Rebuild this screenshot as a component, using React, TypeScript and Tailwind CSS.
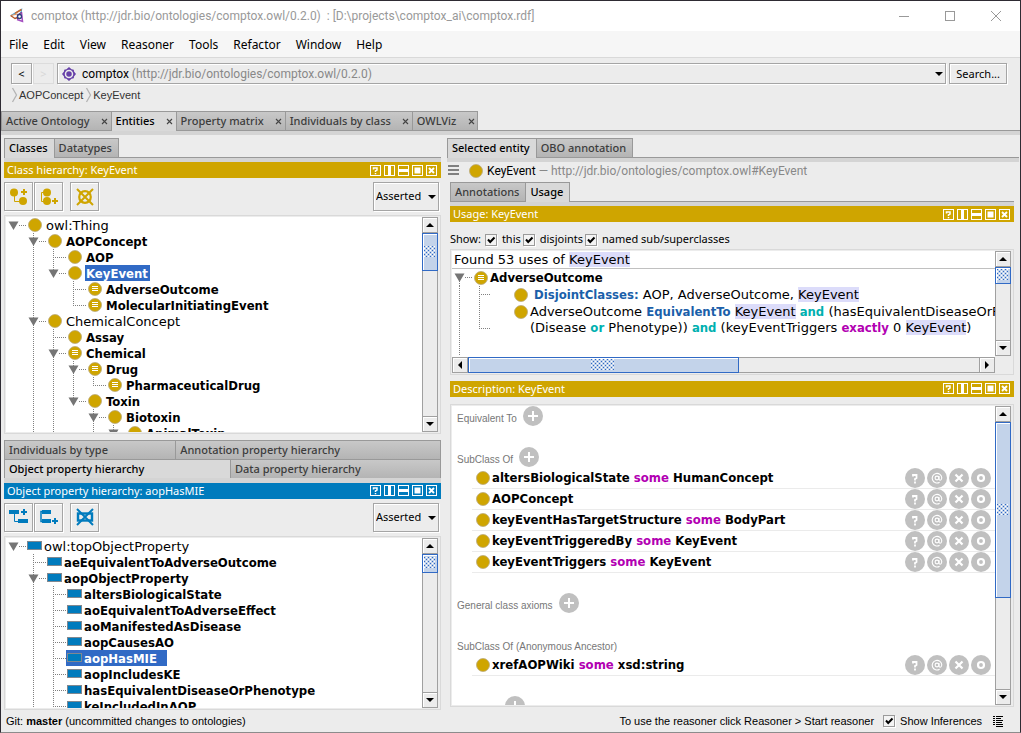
import React, { ReactNode } from "react";

const UI = "font-['Noto_Sans','Open_Sans',sans-serif]";
const URL_TEXT = "font-['Roboto',sans-serif] text-[12px]";
const TREE = "font-['DejaVu_Sans',Verdana,sans-serif]";
const BOLD = "font-bold font-['DejaVu_Sans_Condensed','DejaVu_Sans',sans-serif]";

/* ---------- small drawings ---------- */

function AppLogo() {
  return (
    <svg width="16" height="16" viewBox="0 0 16 16" fill="none" aria-hidden="true">
      <path d="M2 7.500 L12.500 1.500 L12 5" stroke="#4d9fd0" strokeWidth="1.300" />
      <path d="M6 5.300 L12.500 1.500" stroke="#c9682c" strokeWidth="1.500" />
      <path d="M2 7.500 L8.500 5.800" stroke="#dd9a6c" strokeWidth="1.200" />
      <path d="M1.500 7.500 L6 10.500 L8.500 9.500" stroke="#b4562a" strokeWidth="1.400" />
      <path d="M12.500 4 L13.500 13.500 L8 11.500" stroke="#a44fc0" strokeWidth="1.500" />
      <path d="M8.500 11 L8.500 7 L12.500 4.500" stroke="#5a3a86" strokeWidth="1.200" />
      <circle cx="10.500" cy="8.500" r="2" stroke="#2f3f7d" strokeWidth="1.300" />
    </svg>
  );
}

function OntologyIcon() {
  return (
    <svg width="14" height="14" viewBox="0 0 14 14" aria-hidden="true">
      <path d="M7 0L9.500 2.200L11.800 2.800L12 4.600L14 7L12 9.400L11.800 11.200L9.500 11.800L7 14L4.500 11.800L2.200 11.200L2 9.400L0 7L2 4.600L2.200 2.800L4.500 2.200Z" fill="#6640a8" />
      <circle cx="7" cy="7" r="3.500" fill="none" stroke="#ececec" strokeWidth="1.500" />
    </svg>
  );
}

function ClassIcon({ defined = false }: { defined?: boolean }) {
  return (
    <svg width="14" height="14" viewBox="0 0 14 14" className="shrink-0" aria-hidden="true">
      <circle cx="7" cy="7" r="6.500" fill="#cfa500" stroke="#b9a878" strokeWidth="0.800" />
      {defined && <path d="M4 4.500h6M4 6.500h6M4 8.500h6" stroke="#fff" strokeWidth="1" />}
    </svg>
  );
}

function PropIcon() {
  return (
    <svg width="16" height="9" viewBox="0 0 16 9" className="shrink-0" aria-hidden="true">
      <rect x="0.5" y="0.5" width="14" height="8" fill="#007bbd" stroke="#808890" />
    </svg>
  );
}

function Arrow({ dir }: { dir: "up" | "down" | "left" | "right" }) {
  const d = { up: "M0 6h8L4 2z", down: "M0 2h8L4 6z", left: "M6 0v8L2 4z", right: "M2 0v8l4-4z" }[dir];
  return (
    <svg width="8" height="8" viewBox="0 0 8 8" aria-hidden="true">
      <path d={d} fill="#000" />
    </svg>
  );
}

/* ---------- header bar of a view ---------- */

const viewActions: { name: string; draw: ReactNode }[] = [
  { name: "Help", draw: <path d="M3.500 4.500V3h3.500v2L5.500 6v1M5.500 8v1.300" stroke="#fff" strokeWidth="1.500" fill="none" /> },
  { name: "Split vertically", draw: <path d="M4 1h3v9H4z" fill="#fff" /> },
  { name: "Split horizontally", draw: <path d="M1 4h9v3H1z" fill="#fff" /> },
  { name: "Float", draw: <path d="M2.500 2.500h6v6h-6z" fill="#fff" /> },
  { name: "Close", draw: <path d="M3 3l5 5M8 3l-5 5" stroke="#fff" strokeWidth="1.900" /> },
];

function ViewHeader({ title, blue = false }: { title: string; blue?: boolean }) {
  return (
    <div className={`flex h-4 shrink-0 items-center justify-between pr-1 pl-[3px] text-white ${blue ? "bg-[#007bbd]" : "bg-[#cfa500]"}`}>
      <h2 className={`${UI} text-[11px] leading-4`}>{title}</h2>
      <div className="flex gap-[3px]">
        {viewActions.map((a) => (
          <button key={a.name} type="button" aria-label={a.name} className="block">
            <svg width="11" height="11" viewBox="0 0 11 11" className="block">
              <rect x="0.5" y="0.5" width="10" height="10" fill="none" stroke="#fff" />
              {a.draw}
            </svg>
          </button>
        ))}
      </div>
    </div>
  );
}

/* ---------- tabs ---------- */

type TabDef = { label: string; active?: boolean; close?: boolean };

function Tabs({ tabs }: { tabs: TabDef[] }) {
  return (
    <div className="shrink-0">
      <div role="tablist" className="flex h-5">
        {tabs.map((t, i) => (
          <div
            key={t.label}
            className={`flex items-start border-t border-[#999] ${i === 0 ? "border-l" : ""} ${
              t.active ? "border-r bg-[#d9d9d9]" : "border-r border-b bg-gradient-to-b from-[#c8c8c8] to-[#b4b4b4]"
            }`}
          >
            <button
              type="button"
              role="tab"
              aria-selected={!!t.active}
              className={`${UI} h-[18px] pr-[6px] pl-1 text-[11px] leading-[18px] font-medium whitespace-nowrap ${t.active ? "text-black" : "text-[#3c3c3c]"}`}
            >
              {t.label}
            </button>
            {t.close && (
              <button type="button" aria-label={`Close ${t.label}`} className="ml-[3px] flex h-[18px] w-3 items-center justify-center">
                <svg width="7" height="7" viewBox="0 0 7 7" aria-hidden="true">
                  <path d="M1 1l5 5M6 1l-5 5" stroke="#444" strokeWidth="1.100" />
                </svg>
              </button>
            )}
          </div>
        ))}
        <div className="flex-1 border-b border-[#999]" />
      </div>
      <div className="h-1 bg-[#d4d4d4]" />
    </div>
  );
}

/* ---------- scroll bars ---------- */

function Dots() {
  return (
    <svg width="12" height="12" className="max-h-full" aria-hidden="true">
      <defs>
        <pattern id="grip" width="4" height="4" patternUnits="userSpaceOnUse">
          <path d="M0 0h1v1H0zM2 2h1v1H2z" fill="#316ac5" />
          <path d="M2 0h1v1H2zM0 2h1v1H0z" fill="#fff" />
        </pattern>
      </defs>
      <rect width="12" height="12" fill="url(#grip)" />
    </svg>
  );
}

const scrollBtn = "flex size-4 shrink-0 items-center justify-center border border-[#a0a0a0] bg-[#ececec] shadow-[inset_1px_1px_0_#fff]";
const thumbCls = "flex items-center justify-center border border-[#316ac5] bg-[#c3d3ea] shadow-[inset_1px_1px_0_#fff]";

function VScroll({ thumb }: { thumb: string }) {
  return (
    <div className="flex w-4 shrink-0 flex-col bg-[#ececec]">
      <button type="button" aria-label="Scroll up" className={scrollBtn}><Arrow dir="up" /></button>
      <div className="min-h-0 flex-1 border-x border-[#a0a0a0]">
        <div className={`${thumbCls} -mx-px ${thumb}`}><Dots /></div>
      </div>
      <button type="button" aria-label="Scroll down" className={scrollBtn}><Arrow dir="down" /></button>
    </div>
  );
}

function HScroll({ thumb }: { thumb: string }) {
  return (
    <div className="flex h-4 shrink-0 bg-[#ececec]">
      <button type="button" aria-label="Scroll left" className={scrollBtn}><Arrow dir="left" /></button>
      <div className="flex min-w-0 flex-1 border-y border-[#a0a0a0]">
        <div className={`${thumbCls} -my-px ${thumb}`}><Dots /><Dots /></div>
      </div>
      <button type="button" aria-label="Scroll right" className={scrollBtn}><Arrow dir="right" /></button>
    </div>
  );
}

const boxCls = "flex min-h-0 border border-[#d9d9d9] bg-[#ececec] p-px pr-[2px]";

/* ---------- trees ---------- */

type Node = { label: string; depth: number; open?: boolean; defined?: boolean; plain?: boolean; selected?: boolean };

const classTree: Node[] = [
  { label: "owl:Thing", depth: 0, open: true, plain: true },
  { label: "AOPConcept", depth: 1, open: true },
  { label: "AOP", depth: 2 },
  { label: "KeyEvent", depth: 2, open: true, selected: true },
  { label: "AdverseOutcome", depth: 3, defined: true },
  { label: "MolecularInitiatingEvent", depth: 3, defined: true },
  { label: "ChemicalConcept", depth: 1, open: true, plain: true },
  { label: "Assay", depth: 2 },
  { label: "Chemical", depth: 2, open: true, defined: true },
  { label: "Drug", depth: 3, open: true, defined: true },
  { label: "PharmaceuticalDrug", depth: 4, defined: true },
  { label: "Toxin", depth: 3, open: true },
  { label: "Biotoxin", depth: 4, open: true },
  { label: "AnimalToxin", depth: 5, open: true },
];

const propTree: Node[] = [
  { label: "owl:topObjectProperty", depth: 0, open: true, plain: true },
  { label: "aeEquivalentToAdverseOutcome", depth: 1 },
  { label: "aopObjectProperty", depth: 1, open: true },
  { label: "altersBiologicalState", depth: 2 },
  { label: "aoEquivalentToAdverseEffect", depth: 2 },
  { label: "aoManifestedAsDisease", depth: 2 },
  { label: "aopCausesAO", depth: 2 },
  { label: "aopHasMIE", depth: 2, selected: true },
  { label: "aopIncludesKE", depth: 2 },
  { label: "hasEquivalentDiseaseOrPhenotype", depth: 2 },
  { label: "keIncludedInAOP", depth: 2 },
];

/* A branch line goes on below row i when a later sibling follows, loaded or not. */
function continues(nodes: Node[], i: number, depth: number, pending: number[]) {
  for (let j = i + 1; j < nodes.length; j++) {
    if (nodes[j].depth < depth) return false;
    if (nodes[j].depth === depth) return true;
  }
  return pending.includes(depth);
}

function Guide({ up, down, across, toggle }: { up?: boolean; down?: boolean; across?: boolean; toggle?: boolean }) {
  return (
    <svg width="20" height="16" viewBox="0 0 20 16" className="shrink-0" aria-hidden="true">
      {up && <path d="M7.500 0V8" stroke="#808080" strokeDasharray="1 1" />}
      {down && <path d="M7.500 8V16" stroke="#808080" strokeDasharray="1 1" />}
      {across && <path d={toggle ? "M13 8.500H20" : "M7 8.500H20"} stroke="#808080" strokeDasharray="1 1" />}
      {toggle && <path d="M2.500 4.500h10L7.500 13z" fill="#757575" />}
    </svg>
  );
}

function Tree({ nodes, kind, label, pending }: { nodes: Node[]; kind: "class" | "property"; label: string; pending: number[] }) {
  return (
    <ul role="tree" aria-label={label} className={`${TREE} min-w-0 flex-1 overflow-hidden bg-white text-[13px]`}>
      {nodes.map((n, i) => (
        <li key={n.label} role="treeitem" aria-level={n.depth + 1} aria-selected={!!n.selected} className="flex h-4 whitespace-nowrap">
          {Array.from({ length: n.depth + 1 }, (_, d) => {
            const more = d > 0 && continues(nodes, i, d, pending);
            return d < n.depth ? (
              <Guide key={d} up={more} down={more} />
            ) : (
              <Guide key={d} up={d > 0} down={more} across toggle={n.open} />
            );
          })}
          {kind === "class" ? (
            <>
              <span className="flex w-[19px] items-center pl-[2px]"><ClassIcon defined={n.defined} /></span>
              <span className={`pr-[2px] pl-px leading-[18px] ${n.plain ? "" : BOLD} ${n.selected ? "bg-[#316ac5] text-white" : "text-black"}`}>{n.label}</span>
            </>
          ) : (
            <span className={`flex items-center pl-px ${n.selected ? "bg-[#316ac5] pr-[10px] text-white" : "text-black"}`}>
              <PropIcon />
              <span className={`self-start pl-px leading-[18px] ${n.plain ? "" : BOLD}`}>{n.label}</span>
            </span>
          )}
        </li>
      ))}
    </ul>
  );
}

/* ---------- tree tool bars ---------- */

const toolBtn = "flex size-[29px] items-center justify-center border border-[#a5a5a5] bg-[#ececec] shadow-[inset_1px_1px_0_#fff,1px_1px_0_#fff]";

function TreeToolbar({ kind, id }: { kind: "class" | "property"; id: string }) {
  const g = "#cfa500";
  const b = "#007bbd";
  const icons =
    kind === "class"
      ? [
          { name: "Add subclass", art: <><circle cx="5" cy="5.500" r="4" fill={g} /><circle cx="14" cy="14" r="4" fill={g} /><path d="M5.500 8v6.500H11" stroke={g} fill="none" /><path d="M15 2v6M12 5h6" stroke={g} strokeWidth="2" /></> },
          { name: "Add sibling class", art: <><circle cx="8" cy="5.500" r="4" fill={g} /><circle cx="8" cy="14" r="4" fill={g} /><path d="M5 5.500H2.500v9H5" stroke={g} fill="none" /><path d="M16 11v6M13 14h6" stroke={g} strokeWidth="2" /></> },
          { name: "Delete class", art: <><circle cx="10" cy="10" r="5.800" fill="none" stroke={g} strokeWidth="2.200" /><path d="M2 2l16 16M18 2L2 18" stroke={g} strokeWidth="2" /></> },
        ]
      : [
          { name: "Add sub property", art: <><rect x="0" y="3" width="10" height="4" fill={b} /><rect x="9" y="12" width="10" height="4" fill={b} /><path d="M5.500 7v7.500H9" stroke={b} fill="none" /><path d="M15 2v6M12 5h6" stroke={b} strokeWidth="2" /></> },
          { name: "Add sibling property", art: <><rect x="3" y="3" width="9" height="4" fill={b} /><rect x="3" y="12" width="9" height="4" fill={b} /><path d="M4 4.500H2v10h2" stroke={b} fill="none" strokeWidth="1.500" /><path d="M16 11v6M13 14h6" stroke={b} strokeWidth="2" /></> },
          { name: "Delete property", art: <><rect x="3" y="6.500" width="14" height="7" fill="none" stroke={b} strokeWidth="2.400" /><path d="M2 2l16 16M18 2L2 18" stroke={b} strokeWidth="2" /></> },
        ];
  return (
    <div className="flex h-[37px] shrink-0 items-center justify-between pr-[2px]">
      <div className="flex gap-px">
        {icons.map((ic, i) => (
          <button key={ic.name} type="button" aria-label={ic.name} className={`${toolBtn} ${i === 2 ? "ml-[6px]" : ""}`}>
            <svg width="20" height="20" viewBox="0 0 20 20" aria-hidden="true">{ic.art}</svg>
          </button>
        ))}
      </div>
      <div className="relative">
        <select
          id={id}
          aria-label="Hierarchy mode"
          className={`${UI} h-[29px] w-[66px] appearance-none border border-[#a5a5a5] bg-[#ececec] pl-[2px] text-[11px] text-black shadow-[inset_1px_1px_0_#fff,1px_1px_0_#fff]`}
        >
          <option>Asserted</option>
          <option>Inferred</option>
        </select>
        <span className="pointer-events-none absolute top-[11px] right-[3px]"><Arrow dir="down" /></span>
      </div>
    </div>
  );
}

/* ---------- check boxes ---------- */

function Check({ id, label, className }: { id: string; label: string; className: string }) {
  return (
    <span className="flex items-center">
      <span className="relative flex">
        <input id={id} type="checkbox" defaultChecked className="peer size-3 appearance-none border border-[#9a9a9a] bg-[#f4f4f4] shadow-[1px_1px_0_#fff]" />
        <svg width="12" height="12" viewBox="0 0 12 12" className="pointer-events-none absolute inset-0 hidden peer-checked:block" aria-hidden="true">
          <path d="M3 5.500l2.200 2.500L9.500 3.500" stroke="#000" strokeWidth="2" fill="none" />
        </svg>
      </span>
      <label htmlFor={id} className={className}>{label}</label>
    </span>
  );
}

/* ---------- description ---------- */

const K = ({ children }: { children: ReactNode }) => <span className="text-[#b200b2]">{children}</span>;
const Hit = () => <span className="bg-[#dcdcfa]">KeyEvent</span>;

const rowActions: { name: string; art: ReactNode }[] = [
  { name: "Explain", art: <path d="M8 8.500V7h3.500v3l-1.500 1v1.500M10 13.500v2" stroke="#fff" strokeWidth="1.800" fill="none" /> },
  { name: "Annotate", art: <><circle cx="10" cy="10" r="1.900" stroke="#fff" strokeWidth="1.100" fill="none" /><path d="M12 8v3q0 1.200 1.200 1.200T14.800 10A4.800 4.800 0 1 0 12.600 14.200" stroke="#fff" strokeWidth="1.100" fill="none" /></> },
  { name: "Delete", art: <path d="M6.500 6.500l7 7M13.500 6.500l-7 7" stroke="#fff" strokeWidth="2.200" /> },
  { name: "Edit", art: <circle cx="10" cy="10" r="3" stroke="#fff" strokeWidth="2.200" fill="none" /> },
];

function AddButton({ name }: { name: string }) {
  return (
    <button type="button" aria-label={`Add ${name}`} className="block">
      <svg width="20" height="20" viewBox="0 0 20 20" className="block" aria-hidden="true">
        <circle cx="10" cy="10" r="10" fill="#c0c0c0" />
        <path d="M10 5v10M5 10h10" stroke="#fff" strokeWidth="2" />
      </svg>
    </button>
  );
}

function Section({ title, add = true, rows = [] }: { title: string; add?: boolean; rows?: ReactNode[] }) {
  return (
    <section className="mb-5">
      <div className="flex h-[21px] gap-[6px] pl-[5px]">
        <h3 className="pt-[7px] font-['Liberation_Sans',Arial,sans-serif] text-[10px] leading-3 text-[#777]">{title}</h3>
        {add && <AddButton name={title} />}
      </div>
      <ul className="pl-5">
        {rows.map((r, i) => (
          <li key={i} className="flex h-[21px] items-center border-b border-[#ebebeb] pr-1 pl-1">
            <ClassIcon />
            <span className={`${BOLD} flex-1 pl-[2px] text-[13px] leading-5 text-black`}>{r}</span>
            <span className="flex gap-[2px]">
              {rowActions.map((a) => (
                <button key={a.name} type="button" aria-label={a.name} className="block">
                  <svg width="20" height="20" viewBox="0 0 20 20" className="block" aria-hidden="true">
                    <circle cx="10" cy="10" r="10" fill="#c0c0c0" />
                    {a.art}
                  </svg>
                </button>
              ))}
            </span>
          </li>
        ))}
      </ul>
    </section>
  );
}

/* ---------- usage ---------- */

function UsageView() {
  return (
    <div className={`${boxCls} flex-[124_1_0px]`}>
      <div className="flex min-w-0 flex-1 flex-col">
        <div className={`${TREE} min-h-0 flex-1 overflow-hidden bg-white text-[13px] whitespace-nowrap text-black`}>
          <p className="h-[18px] border-b border-[#c0c0c0] pl-[2px] leading-[18px]">Found 53 uses of <Hit /></p>
          <div className="flex h-[17px]">
            <svg width="20" height="17" className="shrink-0" aria-hidden="true">
              <path d="M7.500 12V17" stroke="#808080" strokeDasharray="1 1" />
              <path d="M13 8.500H20" stroke="#808080" strokeDasharray="1 1" />
              <path d="M2.500 4.500h10L7.500 13z" fill="#757575" />
            </svg>
            <span className="flex items-center pl-[2px]"><ClassIcon defined /></span>
            <span className={`${BOLD} pl-[2px] leading-[17px]`}>AdverseOutcome</span>
          </div>
          <div className="flex h-[50px]">
            <svg width="62" height="70" className="shrink-0" aria-hidden="true">
              <path d="M7.500 0V70" stroke="#808080" strokeDasharray="1 1" />
              <path d="M27.500 0V42" stroke="#808080" strokeDasharray="1 1" />
              <path d="M27 8.500H39M27 42.500H39" stroke="#808080" strokeDasharray="1 1" />
            </svg>
            <div>
              <div className="flex h-[17px] items-center">
                <ClassIcon />
                <span className="pl-[6px]"><b className={`${BOLD} text-[#1b5faa]`}>DisjointClasses:</b> AOP, AdverseOutcome, <Hit /></span>
              </div>
              <div className="flex h-[17px] items-center">
                <ClassIcon />
                <span className="pl-[2px]">AdverseOutcome <b className={`${BOLD} text-[#1b5faa]`}>EquivalentTo</b> <Hit /> <b className={`${BOLD} text-[#00b0b0]`}>and</b> (hasEquivalentDiseaseOrPhenotype</span>
              </div>
              <div className="h-4 pl-4 leading-4">
                (Disease <b className={`${BOLD} text-[#00b0b0]`}>or</b> Phenotype)) <b className={`${BOLD} text-[#00b0b0]`}>and</b> (keyEventTriggers <b className={`${BOLD} text-[#b200b2]`}>exactly</b> 0 <Hit />)
              </div>
            </div>
          </div>
        </div>
        <HScroll thumb="w-[53%]" />
      </div>
      <div className="flex pb-[17px]"><VScroll thumb="h-[23%]" /></div>
    </div>
  );
}

/* ---------- page ---------- */

const stackedTabs: TabDef[][] = [
  [{ label: "Individuals by type" }, { label: "Annotation property hierarchy" }],
  [{ label: "Object property hierarchy", active: true }, { label: "Data property hierarchy" }],
];

export default function App() {
  return (
    <div className={`${UI} flex h-screen min-h-[600px] flex-col overflow-hidden border border-[#2e2b33] border-b-[#8c8c8c] bg-[#ececec]`}>
      <header className="shrink-0">
        <div className="flex h-[30px] items-center bg-white pr-[18px] pl-2">
          <AppLogo />
          <h1 className={`${URL_TEXT} ml-[6px] flex-1 whitespace-pre text-[#999]`}>comptox (http://jdr.bio/ontologies/comptox.owl/0.2.0)  : [D:\projects\comptox_ai\comptox.rdf]</h1>
          <div className="flex gap-[34px]">
            <button type="button" aria-label="Minimize"><svg width="12" height="12" className="block"><path d="M1 6.500h10" stroke="#999" /></svg></button>
            <button type="button" aria-label="Maximize"><svg width="12" height="12" className="block"><rect x="1.500" y="1.500" width="9" height="9" fill="none" stroke="#999" /></svg></button>
            <button type="button" aria-label="Close"><svg width="12" height="12" className="block"><path d="M1 1l10 10M11 1L1 11" stroke="#999" /></svg></button>
          </div>
        </div>
        <nav className="flex h-[27px] items-center gap-[15px] border-b border-[#d9d9d9] bg-[#f6f6f6] pt-[2px] pl-2 text-[12px] text-black">
          {["File", "Edit", "View", "Reasoner", "Tools", "Refactor", "Window", "Help"].map((m) => (
            <button key={m} type="button">{m}</button>
          ))}
        </nav>
        <div className="flex items-center gap-[3px] pt-[5px] pr-[13px] pl-[10px] text-[11px]">
          <div className="flex gap-px">
            <button type="button" className="size-[21px] border border-[#a5a5a5] leading-none text-black shadow-[inset_1px_1px_0_#fff,1px_1px_0_#fff]">&lt;</button>
            <button type="button" disabled className="size-[21px] border border-[#dcdcdc] leading-none text-[#d8d8d8]">&gt;</button>
          </div>
          <div className="relative flex h-[21px] flex-1 items-center border border-[#a5a5a5] pl-1 shadow-[inset_1px_1px_0_#fff,1px_1px_0_#fff]">
            <OntologyIcon />
            <span aria-hidden="true" className={`${URL_TEXT} flex-1 pl-[6px] text-black`}>comptox <span className="text-[#888]">(http://jdr.bio/ontologies/comptox.owl/0.2.0)</span></span>
            <span className="mr-[2px]"><Arrow dir="down" /></span>
            <select aria-label="Active ontology" className="absolute inset-0 h-full w-full opacity-0">
              <option>comptox (http://jdr.bio/ontologies/comptox.owl/0.2.0)</option>
            </select>
          </div>
          <button type="button" className="h-[21px] border border-[#a5a5a5] px-[6px] leading-none text-black shadow-[inset_1px_1px_0_#fff,1px_1px_0_#fff]">Search...</button>
        </div>
        <ol className="flex h-[27px] gap-[2px] pt-[3px] pl-[10px] font-['Liberation_Sans',Arial,sans-serif] text-[11px] leading-4 text-[#333]">
          {["AOPConcept", "KeyEvent"].map((c) => (
            <li key={c} className="flex items-center self-start">
              <svg width="8" height="16" viewBox="0 0 8 16" aria-hidden="true"><path d="M1.500 1L5.500 8L1.500 15" stroke="#b4b4b4" fill="none" strokeWidth="1.300" /></svg>
              {c}
            </li>
          ))}
        </ol>
        <Tabs
          tabs={[
            { label: "Active Ontology", close: true },
            { label: "Entities", close: true, active: true },
            { label: "Property matrix", close: true },
            { label: "Individuals by class", close: true },
            { label: "OWLViz", close: true },
          ]}
        />
      </header>

      <main className="grid min-h-0 flex-1 grid-cols-[437fr_572fr] gap-[6px] pt-[3px] pr-px pl-[3px]">
        <div className="flex min-h-0 min-w-0 flex-col">
          <Tabs tabs={[{ label: "Classes", active: true }, { label: "Datatypes" }]} />
          <ViewHeader title="Class hierarchy: KeyEvent" />
          <TreeToolbar kind="class" id="class-mode" />
          <div className={`${boxCls} flex-[219_1_0px]`}>
            <Tree nodes={classTree} kind="class" label="Class hierarchy" pending={[1, 2, 4, 5]} />
            <VScroll thumb="h-[21%]" />
          </div>

          <div className="mt-[6px] shrink-0">
            {stackedTabs.map((row, r) => (
              <div key={r} role="tablist" className={`grid border-x border-t border-[#999] ${r === 0 ? "grid-cols-[171fr_266fr]" : "grid-cols-[226fr_211fr]"}`}>
                {row.map((t, i) => (
                  <button
                    key={t.label}
                    type="button"
                    role="tab"
                    aria-selected={!!t.active}
                    className={`h-[18px] px-1 text-left text-[11px] leading-[18px] font-medium ${i === 0 ? "" : "border-l border-[#999]"} ${
                      t.active ? "bg-[#d9d9d9] text-black" : "bg-gradient-to-b from-[#c8c8c8] to-[#b4b4b4] text-[#3c3c3c]"
                    }`}
                  >
                    {t.label}
                  </button>
                ))}
              </div>
            ))}
            <div className="h-[5px] bg-[#d4d4d4]" />
          </div>
          <ViewHeader title="Object property hierarchy: aopHasMIE" blue />
          <TreeToolbar kind="property" id="property-mode" />
          <div className={`${boxCls} flex-[174_1_0px]`}>
            <Tree nodes={propTree} kind="property" label="Object property hierarchy" pending={[1, 2]} />
            <VScroll thumb="h-[14%]" />
          </div>
        </div>

        <div className="flex min-h-0 min-w-0 flex-col">
          <Tabs tabs={[{ label: "Selected entity", active: true }, { label: "OBO annotation" }]} />
          <div className="flex h-5 shrink-0 items-center pb-[3px]">
            <button type="button" aria-label="Entity menu">
              <svg width="14" height="12" viewBox="0 0 14 12" className="block"><path d="M1 1h11M1 5h11M1 9h11" stroke="#808080" strokeWidth="2" /></svg>
            </button>
            <span className="flex pr-1 pl-2"><ClassIcon /></span>
            <p className={`${URL_TEXT} text-[#888]`}><span className="text-black">KeyEvent</span> — http://jdr.bio/ontologies/comptox.owl#KeyEvent</p>
          </div>
          <div className="flex min-h-0 flex-1 flex-col pr-[5px] pb-[3px] pl-[3px]">
            <Tabs tabs={[{ label: "Annotations" }, { label: "Usage", active: true }]} />
            <ViewHeader title="Usage: KeyEvent" />
            <div className="flex h-[27px] shrink-0 items-center pt-[8px] text-[11px] text-black">
              <span className="pr-1">Show:</span>
              <Check id="show-this" label="this" className="pr-[2px] pl-[5px]" />
              <Check id="show-disjoints" label="disjoints" className="pr-[2px] pl-[5px]" />
              <Check id="show-named" label="named sub/superclasses" className="pl-[5px]" />
            </div>
            <UsageView />
            <div className="mt-[6px] mb-[7px] shrink-0"><ViewHeader title="Description: KeyEvent" /></div>
            <div className={`${boxCls} flex-[304_1_0px]`}>
              <div className="min-w-0 flex-1 overflow-hidden bg-white">
                <Section title="Equivalent To" />
                <Section
                  title="SubClass Of"
                  rows={[
                    <>altersBiologicalState <K>some</K> HumanConcept</>,
                    <>AOPConcept</>,
                    <>keyEventHasTargetStructure <K>some</K> BodyPart</>,
                    <>keyEventTriggeredBy <K>some</K> KeyEvent</>,
                    <>keyEventTriggers <K>some</K> KeyEvent</>,
                  ]}
                />
                <Section title="General class axioms" />
                <Section title="SubClass Of (Anonymous Ancestor)" add={false} rows={[<>xrefAOPWiki <K>some</K> xsd:string</>]} />
                <div className="pl-[53px]"><AddButton name="Instances" /></div>
              </div>
              <VScroll thumb="h-[66%]" />
            </div>
          </div>
        </div>
      </main>

      <footer className="flex h-[22px] shrink-0 items-center pr-4 pl-[5px] font-['Liberation_Sans',Arial,sans-serif] text-[11px] text-black">
        <p className="flex-1">Git: <b>master</b> (uncommitted changes to ontologies)</p>
        <p className="mr-[9px]">To use the reasoner click Reasoner &gt; Start reasoner</p>
        <Check id="show-inferences" label="Show Inferences" className="pl-[5px]" />
        <button type="button" aria-label="Log" className="ml-[11px]">
          <svg width="11" height="11" viewBox="0 0 11 11" className="block"><path d="M0 0.500h2M3 0.500h7M0 2.500h2M3 2.500h5M0 4.500h2M3 4.500h7M0 6.500h2M3 6.500h6M0 8.500h2M3 8.500h7M3 10.500h7" stroke="#000" /></svg>
        </button>
      </footer>
    </div>
  );
}
